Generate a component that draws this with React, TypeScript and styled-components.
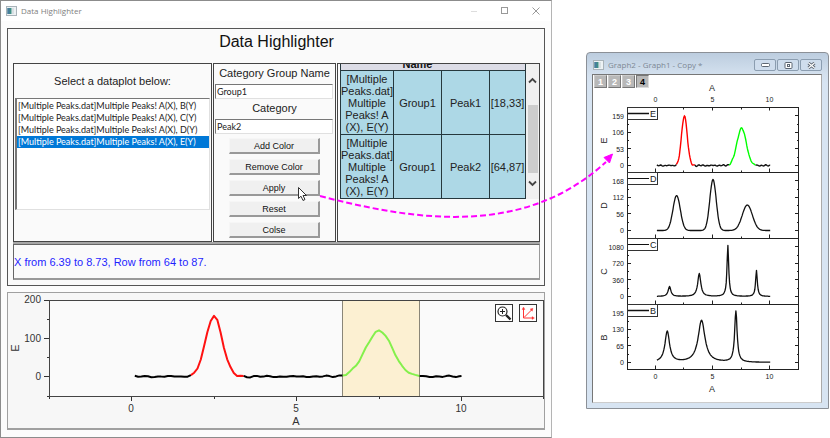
import React from 'react';
import styled, { createGlobalStyle, css } from 'styled-components';

const ARIAL = '"Liberation Sans", Arial, sans-serif';
const HUMANIST = 'Lato, "Segoe UI", sans-serif';

const GlobalStyle = createGlobalStyle`
  *, *::before, *::after { box-sizing: border-box; }
  body { margin: 0; background: #fff; color: #222; font: 11px/12px ${ARIAL}; }
  button, input, select { font: inherit; color: inherit; margin: 0; padding: 0; border-radius: 0; }
  svg { display: block; }
`;

const Page = styled.main`
  position: relative;
  display: grid;
  grid-template-columns: minmax(0, 552fr) minmax(0, 243fr);
  column-gap: 34px;
  align-items: start;
  padding-right: 1px;
`;

const MainWindow = styled.section`
  display: flex;
  flex-direction: column;
  border: 1px solid #8c8c8c;
  border-right-color: #b4b4b4;
  background: #fcfcfc;
`;

const TitleBar = styled.header`
  display: flex;
  align-items: center;
  height: 20px;
  padding: 0 8px 0 5px;
  gap: 4px;
  background: #fff;
`;

const WindowTitle = styled.h2<{ $color: string }>`
  flex: 1;
  margin: 0;
  font: 8px/12px "Open Sans", "Segoe UI", sans-serif;
  color: ${p => p.$color};
  white-space: nowrap;
`;

const Caption = styled.button`
  display: grid;
  place-items: center;
  width: 15px;
  height: 15px;
  border: 0;
  background: none;
`;

const CaptionGroup = styled.div`
  display: flex;
  gap: 16px;
`;

const Body = styled.div`
  display: flex;
  flex-direction: column;
  gap: 6px;
  padding: 7px 6px;
`;

const Frame = styled.div`
  padding: 0 4px 5px 5px;
  border: 1px solid #555;
  background: #fafafa;
`;

const Heading = styled.h1`
  margin: 0;
  padding-top: 3px;
  height: 34px;
  font: 16px/20px ${ARIAL};
  color: #111;
  text-align: center;
`;

const Panels = styled.div`
  display: grid;
  grid-template-columns: minmax(0, 199fr) 123px minmax(0, 203fr);
  gap: 1px;
  padding-bottom: 2px;
  background: linear-gradient(#a6a6a6, #a6a6a6) bottom / 100% 2px no-repeat;
`;

const Panel = styled.div`
  display: flex;
  flex-direction: column;
  min-height: 179px;
  border: 1px solid #444;
  background: #fafafa;
`;

const Status = styled.output`
  display: flex;
  align-items: center;
  height: 36px;
  border: 1px solid #666;
  border-bottom: 2px solid #999;
  border-right-color: #999;
  color: #1f1fff;
`;

const PickLabel = styled.label`
  padding: 11px 0;
  text-align: center;
`;

const PlotList = styled.select`
  height: 112px;
  margin: 0 1px;
  padding-top: 1px;
  overflow: hidden;
  border: 1px solid #e0e0e0;
  border-top-color: #777;
  border-left: 2px solid #777;
  outline: 0;
  background: #fff;
  font: 9px/12px ${HUMANIST};
  option {
    min-height: 12px;
    height: 12px;
    padding: 0 1px;
    line-height: 12px;
  }
  option:checked {
    color: #fff;
    background: #0078d7 linear-gradient(#0078d7, #0078d7);
  }
`;

const FieldLabel = styled.label`
  height: 20px;
  line-height: 19px;
  text-align: center;
`;

const Field = styled.input`
  width: auto;
  height: 15px;
  margin: 0 2px 0 1px;
  padding: 0 1px;
  border: 1px solid #e0e0e0;
  border-top-color: #777;
  border-left-color: #777;
  background: #fff;
  font: 9px/12px ${HUMANIST};
`;

const Actions = styled.div`
  display: flex;
  flex-direction: column;
  gap: 5px;
  padding: 4px 15px 3px;
`;

const ActionButton = styled.button`
  height: 16px;
  border: 1px solid #f6f6f6;
  border-right: 2px solid #999;
  border-bottom: 2px solid #999;
  background: #f0f0f0;
  font: 9px/12px ${ARIAL};
  color: #111;
`;

const ScrollArea = styled.div`
  display: flex;
  width: 199px;
  margin-left: 2px;
`;

const TableClip = styled.div`
  display: flex;
  align-items: flex-end;
  width: 186px;
  height: 135px;
  overflow: hidden;
`;

const Ranges = styled.table`
  width: 185px;
  border-collapse: collapse;
  table-layout: fixed;
  text-align: center;
  th, td { padding: 0; border: 1px solid #26383d; }
  th {
    height: 14px;
    border-width: 1px 0;
    background: #dcdce6;
    color: #111;
    font-weight: bold;
    line-height: 12px;
    vertical-align: bottom;
  }
  th:first-child { border-left-width: 1px; }
  th:last-child { border-right-width: 1px; }
  td { height: 64px; background: #add8e6; }
`;

const ScrollTrack = styled.div`
  display: flex;
  flex-direction: column;
  align-items: center;
  flex: 1;
  padding: 8px 1px;
  background: #f0f0f0;
`;

const ScrollThumb = styled.div`
  flex: 1;
  width: 10px;
  margin: 17px 0 2px;
  background: #cdcdcd;
`;

const ScrollButton = styled.button`
  display: grid;
  place-items: center;
  width: 10px;
  height: 16px;
  border: 0;
  background: none;
`;

const ChartFrame = styled.div`
  position: relative;
  border: 1px solid #a0a0a0;
  border-bottom-width: 2px;
  background: #f7f7f7;
  > svg { width: 100%; height: auto; }
`;

const PlotTools = styled.div`
  position: absolute;
  top: 11px;
  right: 7px;
  display: flex;
  gap: 6px;
`;

const PlotTool = styled.button`
  display: grid;
  place-items: center;
  width: 18px;
  height: 18px;
  border: 1px solid #333;
  background: #fff;
`;

const GraphWindow = styled.section`
  margin-top: 52px;
  padding: 0 6px 5px 5px;
  border: 1px solid #8b9097;
  border-radius: 4px 4px 0 0;
  background: linear-gradient(#bccddf, #d3e0ee 21px, #d7e4f2 30px);
`;

const GraphTitleBar = styled.header`
  display: flex;
  align-items: center;
  gap: 4px;
  height: 21px;
  padding: 3px 0 0 1px;
`;

const GraphCaptions = styled.div`
  display: flex;
  gap: 1px;
`;

const GraphCaption = styled.button`
  display: grid;
  place-items: center;
  width: 22px;
  height: 12px;
  border: 1px solid #8b9db0;
  border-radius: 2px;
  background: #cfdded;
`;

const GraphClient = styled.div`
  border: 1px solid #777;
  border-right-color: #aaa;
  border-bottom-color: #ccc;
  background: #fff;
  > svg { width: 100%; height: auto; overflow: visible; }
`;

const Layers = styled.div`
  display: flex;
  gap: 1px;
  padding: 0 1px;
`;

const LayerButton = styled.button<{ $active?: boolean }>`
  width: 13px;
  height: 13px;
  border: 1px solid #ccc;
  border-right-color: #777;
  border-bottom-color: #777;
  background: #b8b8b8;
  color: #fff;
  font: bold 9px/10px ${ARIAL};
  ${p => p.$active && css`
    border-color: #777 #ddd #ddd #777;
    color: #000;
  `}
`;

const Overlay = styled.svg`
  position: absolute;
  top: 0;
  left: 0;
  width: 100%;
  height: auto;
  pointer-events: none;
`;

const AppIcon = () => (
  <svg width="11" height="10" viewBox="0 0 11 10" aria-hidden="true">
    <rect x=".5" y=".5" width="10" height="9" fill="#edf2f4" stroke="#a9b3b9" />
    <rect x="1.5" y="2" width="4" height="6" fill="#3f8f86" />
    <rect x="1.5" y="2" width="2" height="6" fill="#4a7aa0" />
    <path d="M7 2v6" stroke="#c3cdd2" />
  </svg>
);

type Pt = [number, number];
type Peak = { at: number; h: number; w: number };

const gauss = (x: number, p: Peak) => p.h * Math.exp(-((x - p.at) ** 2) / (2 * p.w * p.w));
const lorentz = (x: number, p: Peak) => p.h / (1 + ((x - p.at) / p.w) ** 2);
const noise = (x: number) => 1.6 * Math.sin(x * 11) * Math.cos(x * 4.3) + 1.4 * Math.sin(x * 17 + 1);

const sample = (from: number, to: number, step: number, f: (x: number) => number): Pt[] => {
  const pts: Pt[] = [];
  for (let x = from; x < to; x += step) pts.push([x, f(x)]);
  pts.push([to, f(to)]);
  return pts;
};
const toPath = (pts: Pt[], sx: (x: number) => number, sy: (y: number) => number) =>
  'M' + pts.map(([x, y]) => `${sx(x).toFixed(1)} ${sy(y).toFixed(1)}`).join('L');

const signalE = (x: number) =>
  gauss(x, { at: 2.5, h: 160, w: 0.25 }) + gauss(x, { at: 7.5, h: 120, w: 0.41 }) + noise(x);

const segments = [
  { from: 0.1, to: 1.8, color: 0 },
  { from: 1.8, to: 3.4, color: 1 },
  { from: 3.4, to: 6.4, color: 0 },
  { from: 6.4, to: 8.73, color: 2 },
  { from: 8.73, to: 10, color: 0 },
];

const MainChart = () => {
  const sx = (x: number) => 131.5 + 33 * x;
  const sy = (y: number) => 376.5 - 0.381 * y;
  const colors = ['#000', '#f11', '#84f04c'];
  return (
    <svg viewBox="8 293 536 135" fontFamily={ARIAL} fontSize="10" fill="#333" role="img" aria-label="Column E against A">
      <rect x="49.5" y="300.5" width="494" height="96" fill="#fafafa" stroke="#444" />
      <rect x="342.5" y="301" width="77" height="95" fill="#fcf0d2" />
      <path d="M342.5 301v95M419.5 301v95" stroke="#8a8678" />
      <path
        d="M44 300.5h5M44 338.5h5M44 376.5h5M47 319.5h2M47 357.5h2M47 396.5h2M131.5 397v4M296.5 397v4M461.5 397v4M49.5 397v2M214.5 397v2M379.5 397v2M543.5 397v2"
        stroke="#333"
      />
      {segments.map(s => (
        <path
          key={s.from}
          d={toPath(sample(s.from, s.to, 0.1, signalE), sx, sy)}
          fill="none"
          stroke={colors[s.color]}
          strokeWidth="2"
          strokeLinejoin="round"
        />
      ))}
      <g textAnchor="end">
        <text x="41" y="303">200</text>
        <text x="41" y="342">100</text>
        <text x="41" y="380">0</text>
      </g>
      <g textAnchor="middle">
        <text x="131" y="412">0</text>
        <text x="296" y="412">5</text>
        <text x="461" y="412">10</text>
        <text x="296" y="425" fontSize="11">A</text>
        <text transform="translate(19 348) rotate(-90)" fontSize="11">E</text>
      </g>
    </svg>
  );
};

const layers = [
  {
    name: 'E', top: 107.5, ticks: ['159', '106', '53', '0'], heavy: true,
    f: (x: number) => signalE(x) * 0.311,
  },
  {
    name: 'D', top: 172.5, ticks: ['168', '112', '56', '0'], heavy: false,
    f: (x: number) => gauss(x, { at: 1.82, h: 35, w: 0.32 }) + gauss(x, { at: 5, h: 51, w: 0.28 }) + gauss(x, { at: 8, h: 25.5, w: 0.44 }),
  },
  {
    name: 'C', top: 238.5, ticks: ['1080', '720', '360', '0'], heavy: false,
    f: (x: number) =>
      lorentz(x, { at: 1.2, h: 10, w: 0.14 }) + lorentz(x, { at: 3.8, h: 23, w: 0.16 }) +
      lorentz(x, { at: 6.3, h: 51, w: 0.09 }) + lorentz(x, { at: 8.8, h: 26, w: 0.09 }),
  },
  {
    name: 'B', top: 304.5, ticks: ['195', '130', '65', '0'], heavy: true,
    f: (x: number) =>
      lorentz(x, { at: 1, h: 31, w: 0.24 }) + lorentz(x, { at: 4, h: 42, w: 0.36 }) + lorentz(x, { at: 7, h: 51, w: 0.13 }),
  },
];

const StackedChart = () => {
  const sx = (x: number) => 655.8 + 11.44 * x;
  const ticksX = [0, 5, 10].map(v => Math.round(sx(v)) - 0.5);
  const minorX = [2.5, 7.5].map(v => Math.round(sx(v)) - 0.5);
  const colors = ['#111', '#f00', '#0f0'];
  return (
    <svg viewBox="593 88 228 314" fontFamily={ARIAL} fontSize="7" fill="#222" role="img" aria-label="Columns E, D, C and B against A">
      <g textAnchor="middle">
        <text x="712" y="91" fontSize="9">A</text>
        <text x="712" y="392" fontSize="9">A</text>
        {[0, 5, 10].map((v, i) => (
          <React.Fragment key={v}>
            <text x={ticksX[i]} y="102">{v}</text>
            <text x={ticksX[i]} y="379">{v}</text>
          </React.Fragment>
        ))}
      </g>
      {layers.map(({ name, top, ticks, heavy, f }, n) => {
        const bottom = n < 3 ? layers[n + 1].top : 369.5;
        const zero = top + 58;
        const sy = (y: number) => zero - y;
        let marks = '';
        for (let k = 0; k < 4; k++) {
          const y = Math.round(zero - 16.5 * k) - 0.5;
          marks += `M628 ${y}h3M795 ${y}h3`;
          marks += `M628 ${y - 8}h1M797 ${y - 8}h1`;
        }
        ticksX.forEach(x => { marks += `M${x} ${bottom}v-4`; });
        minorX.forEach(x => { marks += `M${x} ${bottom}v-2`; });
        if (n === 0) {
          ticksX.forEach(x => { marks += `M${x} ${top}v3`; });
          minorX.forEach(x => { marks += `M${x} ${top}v2`; });
        }
        return (
          <g key={name}>
            <rect x="627.5" y={top} width="171" height={bottom - top} fill="none" stroke="#222" />
            <path d={marks} stroke="#222" fill="none" />
            {n === 0 ? (
              segments.map(s => (
                <path
                  key={s.from}
                  d={toPath(sample(s.from, s.to, 0.05, f), sx, sy)}
                  fill="none"
                  stroke={colors[s.color]}
                  strokeWidth="1.4"
                />
              ))
            ) : (
              <path d={toPath(sample(0.1, 10, 0.05, f), sx, sy)} fill="none" stroke="#111" strokeWidth="1.3" strokeLinejoin="round" />
            )}
            <rect x="627.5" y={top} width="30" height="12" fill="#fff" stroke="#333" />
            <path d={`M628 ${top + 6}h21`} stroke="#111" strokeWidth={heavy ? 1.5 : 1} />
            <text x="650" y={top + 9} fontSize="9">{name}</text>
            <text transform={`translate(607 ${top + 33}) rotate(-90)`} textAnchor="middle" fontSize="9">{name}</text>
            {ticks.map((t, k) => (
              <text key={t} x="624" y={top + 11 + 16.5 * k} textAnchor="end">{t}</text>
            ))}
          </g>
        );
      })}
    </svg>
  );
};

const plots = ['B', 'C', 'D', 'E'];
const rows = [
  { peak: 'Peak1', range: '[18,33]' },
  { peak: 'Peak2', range: '[64,87]' },
];

export default function App() {
  return (
    <>
      <GlobalStyle />
      <Page>
        <MainWindow>
          <TitleBar>
            <AppIcon />
            <WindowTitle $color="#808080">Data Highlighter</WindowTitle>
            <CaptionGroup>
              <Caption aria-label="Minimize">
                <svg width="8" height="8"><path d="M1 4.5h6" stroke="#ddd" /></svg>
              </Caption>
              <Caption aria-label="Maximize">
                <svg width="8" height="8"><rect x=".5" y=".5" width="6" height="6" fill="none" stroke="#999" /></svg>
              </Caption>
              <Caption aria-label="Close">
                <svg width="8" height="8"><path d="M.5.5l7 7M7.5.5l-7 7" stroke="#999" /></svg>
              </Caption>
            </CaptionGroup>
          </TitleBar>
          <Body>
            <Frame>
              <Heading>Data Highlighter</Heading>
              <Panels>
                <Panel>
                  <PickLabel htmlFor="plots">Select a dataplot below:</PickLabel>
                  <PlotList id="plots" size={9} defaultValue="E">
                    {plots.map(p => (
                      <option key={p} value={p}>{`[Multiple Peaks.dat]Multiple Peaks! A(X), ${p}(Y)`}</option>
                    ))}
                  </PlotList>
                </Panel>
                <Panel>
                  <FieldLabel htmlFor="group">Category Group Name</FieldLabel>
                  <Field id="group" defaultValue="Group1" />
                  <FieldLabel htmlFor="category">Category</FieldLabel>
                  <Field id="category" defaultValue="Peak2" />
                  <Actions>
                    {['Add Color', 'Remove Color', 'Apply', 'Reset', 'Colse'].map(a => (
                      <ActionButton key={a} type="button">{a}</ActionButton>
                    ))}
                  </Actions>
                </Panel>
                <Panel>
                  <ScrollArea>
                    <TableClip>
                      <Ranges>
                        <colgroup>
                          <col width="53" />
                          <col width="48" />
                          <col width="48" />
                          <col width="36" />
                        </colgroup>
                        <thead>
                          <tr><th /><th>Name</th><th /><th /></tr>
                        </thead>
                        <tbody>
                          {rows.map(r => (
                            <tr key={r.peak}>
                              <td>[Multiple<br />Peaks.dat]<br />Multiple<br />Peaks! A<br />(X), E(Y)</td>
                              <td>Group1</td>
                              <td>{r.peak}</td>
                              <td>{r.range}</td>
                            </tr>
                          ))}
                        </tbody>
                      </Ranges>
                    </TableClip>
                    <ScrollTrack>
                      <ScrollButton aria-label="Scroll up">
                        <svg width="9" height="7"><path d="M1 5.500l3.500-3.500 3.500 3.500" fill="none" stroke="#444" strokeWidth="1.8" /></svg>
                      </ScrollButton>
                      <ScrollThumb />
                      <ScrollButton aria-label="Scroll down">
                        <svg width="9" height="7"><path d="M1 1.500l3.500 3.500 3.500-3.500" fill="none" stroke="#444" strokeWidth="1.8" /></svg>
                      </ScrollButton>
                    </ScrollTrack>
                  </ScrollArea>
                </Panel>
              </Panels>
              <Status>X from 6.39 to 8.73, Row from 64 to 87.</Status>
            </Frame>
            <ChartFrame>
              <MainChart />
              <PlotTools>
                <PlotTool aria-label="Zoom in">
                  <svg width="16" height="16" fill="none" stroke="#222">
                    <circle cx="6.5" cy="6.5" r="4.5" strokeWidth="1.2" />
                    <path d="M4 6.500h5M6.500 4v5" />
                    <path d="M10 10l4.500 4.500" strokeWidth="2.400" />
                  </svg>
                </PlotTool>
                <PlotTool aria-label="Rescale axes">
                  <svg width="16" height="16" fill="none" stroke="#f33">
                    <path d="M3.500 4v9H12M4 12.500l7.500-7.500" />
                    <path d="M2 4.500l1.500-2.500 1.500 2.500zM12 11.500l2.500 1.500-2.500 1.500zM10 4l3-.7-.7 3z" fill="#f33" strokeWidth=".3" />
                  </svg>
                </PlotTool>
              </PlotTools>
            </ChartFrame>
          </Body>
        </MainWindow>
        <GraphWindow>
          <GraphTitleBar>
            <AppIcon />
            <WindowTitle $color="#7d8894">Graph2 - Graph1 - Copy *</WindowTitle>
            <GraphCaptions>
              <GraphCaption aria-label="Minimize">
                <svg width="9" height="6"><rect x=".5" y="1.5" width="8" height="3" rx="1" fill="#fff" stroke="#5d6672" /></svg>
              </GraphCaption>
              <GraphCaption aria-label="Maximize">
                <svg width="9" height="7"><rect x="1" y=".5" width="7" height="6" rx="1" fill="#fff" stroke="#5d6672" /><rect x="3.500" y="2.500" width="2" height="2" fill="none" stroke="#5d6672" /></svg>
              </GraphCaption>
              <GraphCaption aria-label="Close">
                <svg width="9" height="7"><path d="M1.500 1l6 5M7.500 1l-6 5" stroke="#5d6672" strokeWidth="3" /><path d="M1.500 1l6 5M7.500 1l-6 5" stroke="#fff" strokeWidth="1.200" /></svg>
              </GraphCaption>
            </GraphCaptions>
          </GraphTitleBar>
          <GraphClient>
            <Layers>
              {[1, 2, 3, 4].map(n => (
                <LayerButton key={n} $active={n === 4}>{n}</LayerButton>
              ))}
            </Layers>
            <StackedChart />
          </GraphClient>
        </GraphWindow>
        <Overlay viewBox="0 0 830 438" aria-hidden="true">
          <path d="M320 196C420 222 525 236 606 162" fill="none" stroke="#f0f" strokeWidth="2" strokeDasharray="6 3" />
          <path d="M612.500 154l-3 9-5.500-5.500z" fill="#f0f" stroke="#f0f" />
          <path d="M298.500 187.500v11l2.500-2.300 2 4.300 2-1-2-4h3.500z" fill="#fff" stroke="#333" />
        </Overlay>
      </Page>
    </>
  );
}
